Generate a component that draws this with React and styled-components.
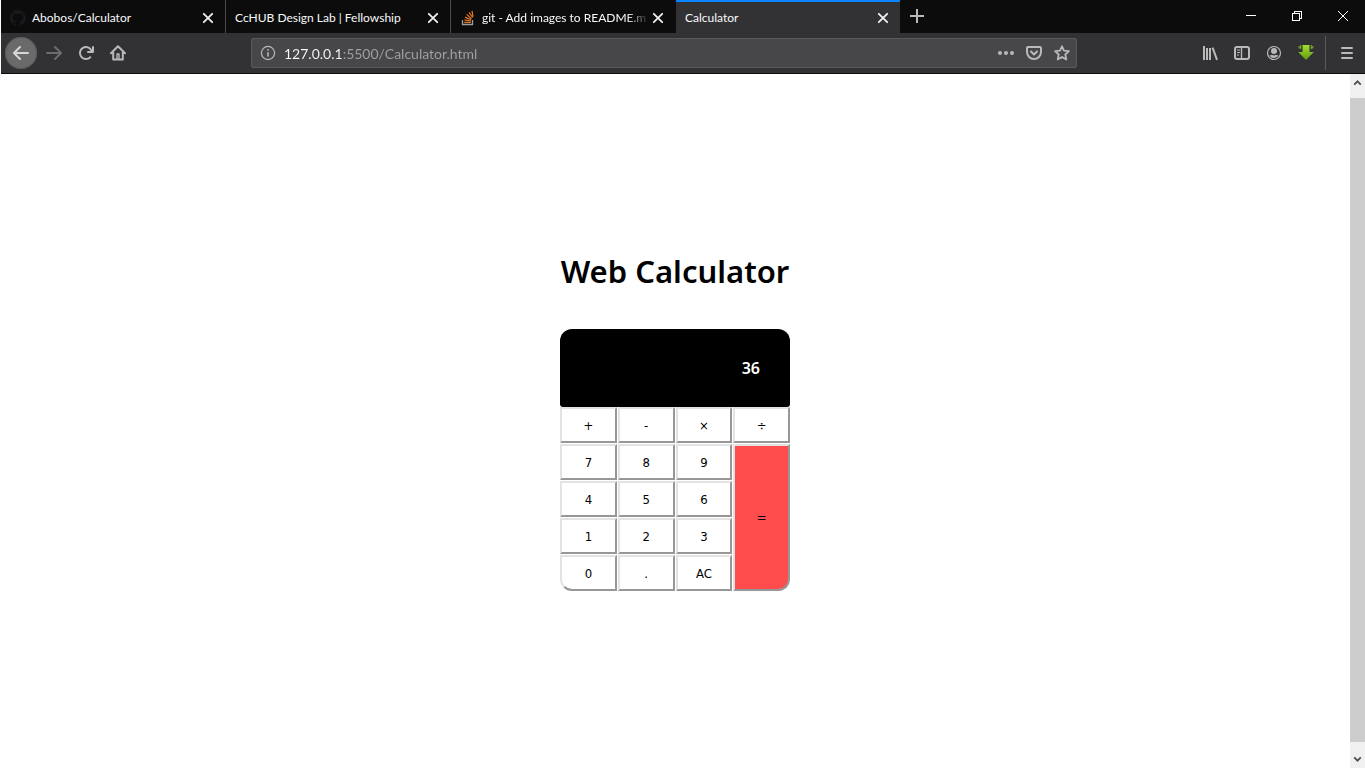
import React from "react";
import styled, { createGlobalStyle, css } from "styled-components";

const GlobalStyle = createGlobalStyle`
  *, *::before, *::after { box-sizing: border-box; }
  html, body { margin: 0; background: #fff; }
  body { font-family: "Noto Sans", "Open Sans", sans-serif; font-size: 12px; color: #000; }
  button, input { font: inherit; margin: 0; }
`;

const Window = styled.div`
  display: flex;
  flex-direction: column;
  min-height: 100vh;
`;

const Chrome = styled.header`
  margin-left: 1px;
  background: #323234;
  color: #f9f9fa;
  border-bottom: 1px solid #0c0c0d;
`;

const TabBar = styled.div`
  display: flex;
  height: 33px;
  background: #0c0c0d;
`;

const Tab = styled.div`
  display: flex;
  align-items: center;
  flex: 0 1 225px;
  min-width: 0;
  padding: 2px 9px 0 9px;
  border-right: 1px solid ${(p) => (p.$divider ? "#4a4a4b" : "transparent")};
  ${(p) =>
    p.$active &&
    css`
      background: #323234;
      background-clip: padding-box;
      box-shadow: inset 0 2px #0a84ff;
    `}
`;

const TabTitle = styled.button`
  flex: 1;
  min-width: 0;
  padding: 0 0 0 ${(p) => (p.$icon ? 6 : 0)}px;
  border: 0;
  background: none;
  color: inherit;
  font-family: Lato, "Open Sans", sans-serif;
  line-height: 16px;
  text-align: left;
  white-space: nowrap;
  overflow: hidden;
  ${(p) => p.$fade && "mask-image: linear-gradient(to left, transparent, #000 24px);"}
`;

const IconButton = styled.button`
  display: flex;
  align-items: center;
  justify-content: center;
  flex: none;
  width: ${(p) => p.$w || 32}px;
  height: ${(p) => p.$h || 32}px;
  padding: 0;
  border: 0;
  border-radius: 50%;
  background: none;
  color: ${(p) => p.$color || "#b9b9ba"};
  ${(p) => p.$round && "margin-right: 1px; background: #6a6a6b; box-shadow: inset 0 0 0 1px #59595a;"}
`;

const WindowControls = styled.div`
  display: flex;
  margin-left: auto;
`;

const Toolbar = styled.nav`
  display: flex;
  align-items: center;
  height: 40px;
  padding: 0 2px 0 4px;
`;

const AddressBar = styled.div`
  display: flex;
  align-items: center;
  flex: 1;
  min-width: 0;
  height: 30px;
  margin: 0 117px;
  border: 1px solid #59595b;
  border-radius: 2px;
  background: #474749;
`;

const Address = styled.input`
  flex: 1;
  min-width: 0;
  padding: 2px 0 0;
  border: 0;
  outline: 0;
  font-family: Lato, "Open Sans", sans-serif;
  font-size: 14px;
  line-height: 20px;
  color: transparent;
  background: linear-gradient(to right, #f9f9fa 58px, #a1a1a2 58px);
  background-clip: text;
`;

const ToolbarDivider = styled.span`
  width: 1px;
  height: 34px;
  margin: 0 5px 0 3px;
  background: #5b5b5c;
`;

const Viewport = styled.div`
  display: flex;
  flex: 1;
`;

const Page = styled.main`
  display: flex;
  flex: 1;
  flex-direction: column;
  align-items: center;
  justify-content: center;
`;

const Title = styled.h1`
  margin: 0 0 38px;
  font-family: "Noto Sans", sans-serif;
  font-size: 31px;
  font-weight: 600;
  line-height: 40px;
  white-space: nowrap;
`;

const Calculator = styled.section`
  width: 230px;
`;

const Display = styled.output`
  display: flex;
  align-items: center;
  justify-content: flex-end;
  height: 78px;
  padding: 0 30px;
  border-radius: 12px 12px 3px 3px;
  background: #000;
  color: #fff;
  font-size: 16px;
  font-weight: 600;
`;

const Keypad = styled.div`
  display: grid;
  grid-template-columns: repeat(4, 1fr);
  grid-auto-rows: 36px;
  gap: 1px;
`;

const Key = styled.button`
  min-width: 0;
  padding: 0;
  border: 2px solid;
  border-color: #e3e3e3 #979797 #979797 #e3e3e3;
  background: ${(p) => (p.$equals ? "#ff4d4d" : "#fff")};
  color: #000;
  font-family: "DejaVu Sans Condensed", "Noto Sans", sans-serif;
  font-size: 13px;
  ${(p) => p.$equals && "grid-row: span 4; border-bottom-right-radius: 12px;"}
  ${(p) => p.$corner && "border-bottom-left-radius: 12px;"}
`;

const Scrollbar = styled.div`
  display: flex;
  flex-direction: column;
  justify-content: space-between;
  width: 15px;
  background: #f0f0f0;
`;

const Thumb = styled.div`
  flex: 1;
  margin: 6px 0 8px;
  background: #cdcdcd;
`;

const Svg = ({ size = 16, children, ...rest }) => (
  <svg width={size} height={size} viewBox="0 0 16 16" fill="none" stroke="currentColor" aria-hidden="true" {...rest}>
    {children}
  </svg>
);

const GithubIcon = () => (
  <Svg fill="#17191c" stroke="none">
    <path d="M8 0a8 8 0 0 0-2.53 15.59c.4.07.55-.17.55-.38v-1.49C3.8 14.2 3.33 12.66 3.33 12.66c-.36-.92-.89-1.17-.89-1.17-.73-.5.05-.49.05-.49.81.06 1.23.83 1.23.83.71 1.22 1.87.87 2.33.66.07-.52.28-.87.5-1.07-1.77-.2-3.64-.89-3.64-3.95 0-.87.31-1.59.82-2.15-.08-.2-.36-1.02.08-2.12 0 0 .67-.21 2.2.82a7.6 7.6 0 0 1 4 0c1.53-1.04 2.2-.82 2.2-.82.44 1.1.16 1.92.08 2.12.51.56.82 1.27.82 2.15 0 3.07-1.87 3.75-3.65 3.95.29.25.54.73.54 1.48v2.2c0 .21.15.46.55.38A8 8 0 0 0 8 0z" />
  </Svg>
);

const StackIcon = () => (
  <Svg>
    <path d="M2.5 10v4.5h10V10" stroke="#9b9fa4" strokeWidth="1.3" />
    <path d="M4.3 12.3h6.5M4.4 9.8l6.5 1.2M5 7.1l6 2.7M6.6 4.4l5 4.3M9 2.3l3.7 5.2M12 .8l1 5.8" stroke="#e87922" strokeWidth="1.2" />
  </Svg>
);

const CloseIcon = () => (
  <Svg>
    <path d="M3.8 3.8l8.4 8.4m0-8.4l-8.4 8.4" strokeWidth="1.8" strokeLinecap="round" />
  </Svg>
);

const ArrowIcon = ({ flip }) => (
  <Svg stroke="none" fill="currentColor" transform={flip ? "scale(-1 1)" : undefined}>
    <path d="M15 7H3.414l4.293-4.293a1 1 0 0 0-1.414-1.414l-6 6a1 1 0 0 0 0 1.414l6 6a1 1 0 0 0 1.414-1.414L3.414 9H15a1 1 0 0 0 0-2z" />
  </Svg>
);

const ReloadIcon = () => (
  <Svg stroke="none" fill="currentColor">
    <path d="M15 1a1 1 0 0 0-1 1v2.418A6.995 6.995 0 1 0 8 15a6.954 6.954 0 0 0 4.95-2.05 1 1 0 0 0-1.414-1.414A5.019 5.019 0 1 1 12.549 6H10a1 1 0 0 0 0 2h5a1 1 0 0 0 1-1V2a1 1 0 0 0-1-1z" />
  </Svg>
);

const HomeIcon = () => (
  <Svg strokeWidth="2" strokeLinecap="round" strokeLinejoin="round">
    <path d="M1 8.2L8 1.2l7 7M3.2 7v7.4h9.6V7" />
    <path d="M7 14V9h2v5" strokeWidth="1.4" />
  </Svg>
);

const InfoIcon = () => (
  <Svg>
    <circle cx="8" cy="8" r="6.6" strokeWidth="1.2" />
    <path d="M8 7.2v4.3M8 4.2v1.6" strokeWidth="1.6" />
  </Svg>
);

const DotsIcon = () => (
  <Svg stroke="none" fill="currentColor">
    <circle cx="2" cy="8" r="2" />
    <circle cx="8" cy="8" r="2" />
    <circle cx="14" cy="8" r="2" />
  </Svg>
);

const PocketIcon = () => (
  <Svg strokeWidth="2" strokeLinecap="round" strokeLinejoin="round">
    <path d="M2 2h12a1 1 0 0 1 1 1v4A7 7 0 0 1 1 7V3a1 1 0 0 1 1-1z" />
    <path d="M5 6.5l3 3 3-3" />
  </Svg>
);

const StarIcon = () => (
  <Svg strokeWidth="1.8" strokeLinejoin="round">
    <path d="M8 1.3l2 4.4 4.9.5-3.6 3.3 1 4.9L8 12l-4.3 2.4 1-4.9L1.1 6.2 6 5.7z" />
  </Svg>
);

const LibraryIcon = () => (
  <Svg strokeWidth="2">
    <path d="M2 1v14M5 3v12M8 3v12M10.6 2.6L15 14.8" />
  </Svg>
);

const SidebarIcon = () => (
  <Svg strokeWidth="2">
    <rect x="1" y="2" width="14" height="12" rx="2" />
    <path d="M7.5 2v12" strokeWidth="1.4" />
    <path d="M3 5h3M3 7.5h3M3 10h2" strokeWidth="1" />
  </Svg>
);

const AccountIcon = () => (
  <Svg>
    <circle cx="8" cy="8" r="6.5" strokeWidth="1.2" />
    <circle cx="8" cy="6" r="3" fill="currentColor" stroke="none" />
    <path d="M3.4 10.2c1 .2 2 .2 2.6-.4 1.2.8 2.8.8 4 0 .6.6 1.6.6 2.6.4A5.2 5.2 0 0 1 3.4 10.2z" fill="currentColor" stroke="none" />
  </Svg>
);

const DownloadIcon = () => (
  <Svg stroke="none">
    <defs>
      <linearGradient id="leaf" x1="0" y1="0" x2="0" y2="1">
        <stop offset="0" stopColor="#a4dc35" />
        <stop offset="1" stopColor="#5f9c0c" />
      </linearGradient>
    </defs>
    <path d="M4.5 0h7v7h4.3L8 15 .2 7h4.3z" fill="url(#leaf)" />
    <path d="M2.7 0v4M13.3 0v4M1.2 1v2.5M14.8 1v2.5" stroke="#84bd22" strokeWidth="1" />
  </Svg>
);

const MenuIcon = () => (
  <Svg strokeWidth="2" strokeLinecap="round">
    <path d="M3 3h10M3 8h10M3 13h10" />
  </Svg>
);

const PlusIcon = () => (
  <Svg strokeWidth="2">
    <path d="M8 1v14M1 8h14" />
  </Svg>
);

const MinimizeIcon = () => (
  <Svg shapeRendering="crispEdges">
    <path d="M4 7.5h10" />
  </Svg>
);

const RestoreIcon = () => (
  <Svg shapeRendering="crispEdges">
    <path d="M4.5 5.5h7v7h-7zM6.5 5.5v-2h7v7h-2" />
  </Svg>
);

const WindowCloseIcon = () => (
  <Svg>
    <path d="M4 3l10 10M14 3L4 13" />
  </Svg>
);

const ScrollArrow = ({ down }) => (
  <Svg strokeWidth="2" transform={down ? "scale(1 -1)" : undefined}>
    <path d="M4.5 9.8L8 6.3l3.5 3.5" />
  </Svg>
);

const tabs = [
  { title: "Abobos/Calculator", icon: <GithubIcon />, divider: true },
  { title: "CcHUB Design Lab | Fellowship", divider: true },
  { title: "git - Add images to README.m", icon: <StackIcon />, fade: true },
  { title: "Calculator", active: true },
];

const keys = [
  { label: "+" }, { label: "-" }, { label: "×" }, { label: "÷" },
  { label: "7" }, { label: "8" }, { label: "9" }, { label: "=", equals: true },
  { label: "4" }, { label: "5" }, { label: "6" },
  { label: "1" }, { label: "2" }, { label: "3" },
  { label: "0", corner: true }, { label: "." }, { label: "AC" },
];

export default function App() {
  return (
    <Window>
      <GlobalStyle />
      <Chrome>
        <TabBar>
          {tabs.map((t) => (
            <Tab key={t.title} $active={t.active} $divider={t.divider}>
              {t.icon}
              <TabTitle $icon={Boolean(t.icon)} $fade={t.fade}>{t.title}</TabTitle>
              <IconButton $w={16} $h={16} $color="#f0f0f0" aria-label={`Close ${t.title}`}>
                <CloseIcon />
              </IconButton>
            </Tab>
          ))}
          <IconButton aria-label="New tab"><PlusIcon /></IconButton>
          <WindowControls>
            <IconButton $w={46} $color="#fff" aria-label="Minimize"><MinimizeIcon /></IconButton>
            <IconButton $w={46} $color="#fff" aria-label="Restore"><RestoreIcon /></IconButton>
            <IconButton $w={46} $color="#fff" aria-label="Close window"><WindowCloseIcon /></IconButton>
          </WindowControls>
        </TabBar>
        <Toolbar>
          <IconButton $round $color="#d6d6d6" aria-label="Back"><ArrowIcon /></IconButton>
          <IconButton $color="#6c6c6d" aria-label="Forward"><ArrowIcon flip /></IconButton>
          <IconButton aria-label="Reload"><ReloadIcon /></IconButton>
          <IconButton aria-label="Home"><HomeIcon /></IconButton>
          <AddressBar>
            <IconButton aria-label="Site information"><InfoIcon /></IconButton>
            <Address aria-label="Address" defaultValue="127.0.0.1:5500/Calculator.html" />
            <IconButton $w={28} aria-label="Page actions"><DotsIcon /></IconButton>
            <IconButton $w={28} aria-label="Save to Pocket"><PocketIcon /></IconButton>
            <IconButton $w={28} aria-label="Bookmark"><StarIcon /></IconButton>
          </AddressBar>
          <IconButton aria-label="Library"><LibraryIcon /></IconButton>
          <IconButton aria-label="Sidebar"><SidebarIcon /></IconButton>
          <IconButton aria-label="Account"><AccountIcon /></IconButton>
          <IconButton aria-label="Downloads"><DownloadIcon /></IconButton>
          <ToolbarDivider />
          <IconButton aria-label="Menu"><MenuIcon /></IconButton>
        </Toolbar>
      </Chrome>
      <Viewport>
        <Page>
          <Title>Web Calculator</Title>
          <Calculator>
            <Display>36</Display>
            <Keypad>
              {keys.map((k) => (
                <Key key={k.label} $equals={k.equals} $corner={k.corner}>
                  {k.label}
                </Key>
              ))}
            </Keypad>
          </Calculator>
        </Page>
        <Scrollbar>
          <IconButton $w={15} $h={18} $color="#505050" aria-label="Scroll up"><ScrollArrow /></IconButton>
          <Thumb />
          <IconButton $w={15} $h={18} $color="#505050" aria-label="Scroll down"><ScrollArrow down /></IconButton>
        </Scrollbar>
      </Viewport>
    </Window>
  );
}
